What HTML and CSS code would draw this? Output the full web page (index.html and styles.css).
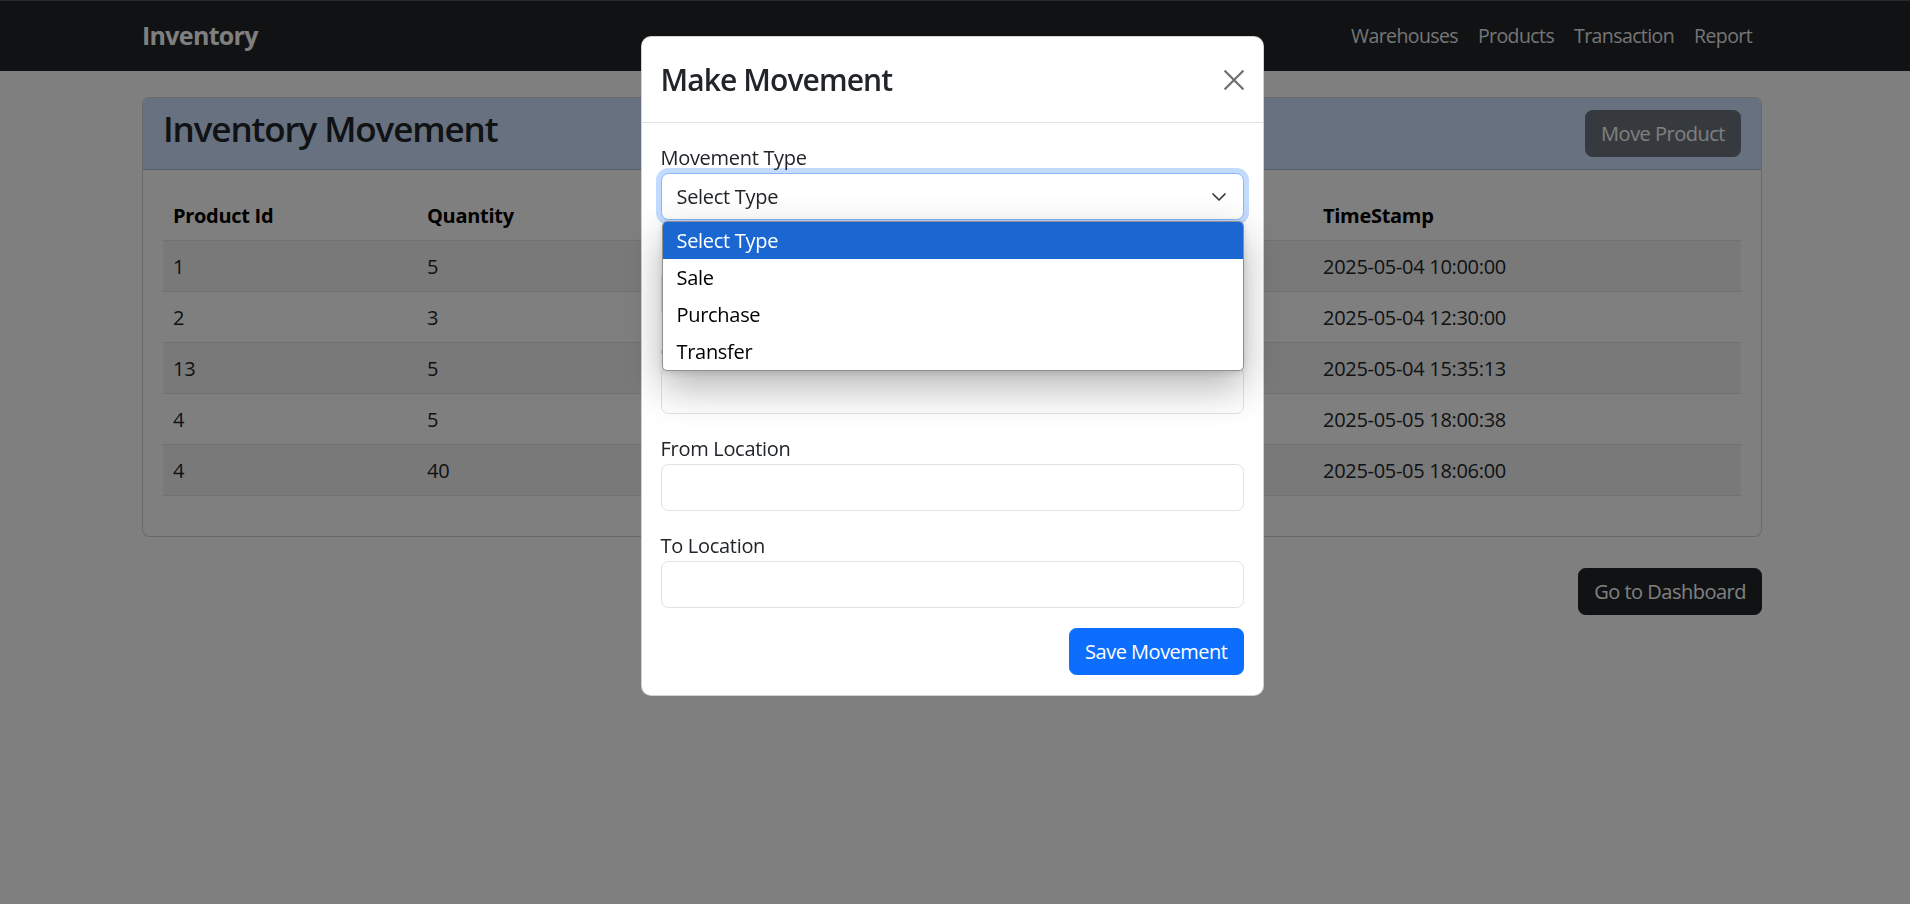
FILE: index.html
```html
<!DOCTYPE html>
<html lang="en">
<head>
<meta charset="utf-8">
<title>Inventory Movement</title>
<link rel="stylesheet" href="styles.css">
</head>
<body>
<nav class="navbar">
  <div class="container nav-inner">
    <a class="brand" href="#">Inventory</a>
    <ul class="nav-links">
      <li><a href="#">Warehouses</a></li>
      <li><a href="#">Products</a></li>
      <li><a href="#">Transaction</a></li>
      <li><a href="#">Report</a></li>
    </ul>
  </div>
</nav>

<main class="container page">
  <section class="card">
    <div class="card-header">
      <h3 class="card-title">Inventory Movement</h3>
      <button class="btn btn-secondary">Move Product</button>
    </div>
    <div class="card-body">
      <table class="table">
        <thead>
          <tr>
            <th class="c1">Product Id</th>
            <th class="c2">Quantity</th>
            <th class="c3">Type</th>
            <th class="c4">From</th>
            <th class="c5">To</th>
            <th class="c6">TimeStamp</th>
          </tr>
        </thead>
        <tbody>
          <tr><td>1</td><td>5</td><td>Sale</td><td>1</td><td>2</td><td>2025-05-04 10:00:00</td></tr>
          <tr><td>2</td><td>3</td><td>Purchase</td><td>2</td><td>1</td><td>2025-05-04 12:30:00</td></tr>
          <tr><td>13</td><td>5</td><td>Transfer</td><td>1</td><td>3</td><td>2025-05-04 15:35:13</td></tr>
          <tr><td>4</td><td>5</td><td>Sale</td><td>3</td><td>1</td><td>2025-05-05 18:00:38</td></tr>
          <tr><td>4</td><td>40</td><td>Purchase</td><td>2</td><td>3</td><td>2025-05-05 18:06:00</td></tr>
        </tbody>
      </table>
    </div>
  </section>
  <div class="page-actions">
    <button class="btn btn-dark">Go to Dashboard</button>
  </div>
</main>

<div class="backdrop"></div>

<div class="modal">
  <div class="modal-dialog">
    <div class="modal-header">
      <h4 class="modal-title">Make Movement</h4>
      <button class="btn-close" aria-label="Close">
        <svg viewBox="0 0 16 16" width="20" height="20"><path d="M1 1 15 15M15 1 1 15" stroke="currentColor" stroke-width="1.8" stroke-linecap="round" fill="none"/></svg>
      </button>
    </div>
    <div class="modal-body">
      <div class="form-group">
        <label>Movement Type</label>
        <div class="select focused">
          <span>Select Type</span>
          <svg class="chevron" viewBox="0 0 16 16" width="16" height="16"><path d="m2 5 6 6 6-6" fill="none" stroke="#343a40" stroke-width="1.7" stroke-linecap="round" stroke-linejoin="round"/></svg>
        </div>
        <ul class="select-popup">
          <li class="active">Select Type</li>
          <li>Sale</li>
          <li>Purchase</li>
          <li>Transfer</li>
        </ul>
      </div>
      <div class="form-group">
        <label>Product Id</label>
        <div class="input"></div>
      </div>
      <div class="form-group">
        <label>Quantity</label>
        <div class="input"></div>
      </div>
      <div class="form-group">
        <label>From Location</label>
        <div class="input"></div>
      </div>
      <div class="form-group">
        <label>To Location</label>
        <div class="input"></div>
      </div>
      <div class="modal-actions">
        <button class="btn btn-primary">Save Movement</button>
      </div>
    </div>
  </div>
</div>
</body>
</html>
```

FILE: styles.css
```css
* { box-sizing: border-box; }

html, body {
  margin: 0;
  height: 100%;
}

body {
  font-family: "Open Sans", "Noto Sans", sans-serif;
  font-size: 20px;
  line-height: 1.5;
  color: #212529;
  background: #fff;
  overflow: hidden;
}

/* Layout column is centred on x=952 (page had a 6px scrollbar gutter) */
.container {
  width: 1650px;
  margin: 0 auto;
  padding: 0 15px;
  position: relative;
  left: -3px;
}

/* Navbar */
.navbar {
  background: #212529;
  border-top: 1px solid #50555c;
  padding: 10px 0;
}
.nav-inner {
  display: flex;
  align-items: center;
  justify-content: space-between;
}
.brand {
  color: #fff;
  font-size: 25px;
  font-weight: 700;
  line-height: 37.5px;
  padding: 6.25px 0;
  text-decoration: none;
  letter-spacing: -0.7px;
}
.nav-links {
  list-style: none;
  margin: 0;
  padding: 0;
  display: flex;
}
.nav-links a {
  display: block;
  padding: 10px 10px;
  color: rgba(255, 255, 255, 0.92);
  text-decoration: none;
  font-size: 19.5px;
  letter-spacing: -0.6px;
}

/* Page */
.page { padding-top: 26px; }

.card {
  border: 1px solid rgba(0, 0, 0, 0.175);
  border-radius: 7.5px;
  background: #fff;
  overflow: hidden;
}
.card-header {
  background: #cfe2ff;
  border-bottom: 1px solid rgba(0, 0, 0, 0.175);
  padding: 9.5px 20px;
  display: flex;
  align-items: center;
  justify-content: space-between;
}
.card-title {
  margin: 0 0 10px;
  font-size: 35px;
  font-weight: 600;
  line-height: 1.2;
  letter-spacing: -1.1px;
}
.card-body { padding: 20px; }

.table {
  width: 100%;
  border-collapse: collapse;
  table-layout: fixed;
  margin-bottom: 20px;
}
.table th, .table td {
  text-align: left;
  padding: 11px 10px 9px;
  border-bottom: 1px solid #dee2e6;
  line-height: 30px;
  letter-spacing: -0.3px;
}
.table th { font-weight: 700; color: #000; }
.table tbody tr:nth-child(odd) td { background: #f2f2f2; }
.c1 { width: 254px; }
.c2 { width: 254px; }
.c3, .c4, .c5 { width: 214px; }

.page-actions {
  margin-top: 31px;
  text-align: right;
}

/* Buttons */
.btn {
  font-family: inherit;
  font-size: 20px;
  line-height: 30px;
  padding: 7.5px 15px;
  border: 1px solid transparent;
  border-radius: 7.5px;
  color: #fff;
  cursor: pointer;
  letter-spacing: -0.5px;
}
.btn-secondary { background: #6c757d; border-color: #6c757d; }
.btn-dark { background: #212529; border-color: #212529; }
.btn-primary { background: #0d6efd; border-color: #0d6efd; }

/* Backdrop + modal */
.backdrop {
  position: fixed;
  inset: 0;
  background: rgba(0, 0, 0, 0.5);
}
.modal {
  position: fixed;
  inset: 0;
  padding-right: 6px;
}
.modal-dialog {
  width: 623px;
  margin: 36px auto 0;
  background: #fff;
  border: 1px solid rgba(0, 0, 0, 0.175);
  border-radius: 10px;
}
.modal-header {
  display: flex;
  align-items: center;
  padding: 20px 19px 20px 19px;
  border-bottom: 1px solid #dee2e6;
}
.modal-title {
  margin: 0;
  font-size: 30px;
  line-height: 45px;
  font-weight: 600;
  letter-spacing: -0.9px;
}
.btn-close {
  margin-left: auto;
  width: 20px;
  height: 20px;
  padding: 0;
  border: 0;
  background: transparent;
  color: #6f6f6f;
  display: flex;
}
.modal-body { padding: 20px 19px; }

.form-group {
  position: relative;
  margin-bottom: 20px;
}
.form-group label {
  display: block;
  line-height: 30px;
  letter-spacing: -0.3px;
}
.select, .input {
  height: 47px;
  border: 1px solid #dee2e6;
  border-radius: 7.5px;
  background: #fff;
}
.select {
  display: flex;
  align-items: center;
  justify-content: space-between;
  padding: 0 16px 0 15px;
  letter-spacing: -0.3px;
}
.select.focused {
  border-color: #86b7fe;
  box-shadow: 0 0 0 5px rgba(13, 110, 253, 0.25);
}

.select-popup {
  position: absolute;
  top: calc(100% + 1px);
  left: 1px;
  right: 0;
  margin: 0;
  padding: 0;
  list-style: none;
  background: #fff;
  border: 1px solid #8f8f8f;
  border-radius: 5px;
  overflow: hidden;
  box-shadow: 0 16px 40px rgba(0, 0, 0, 0.3), 0 2px 6px rgba(0, 0, 0, 0.12);
  z-index: 2;
}
.select-popup li {
  height: 37px;
  line-height: 37px;
  padding-left: 14px;
  color: #000;
  letter-spacing: -0.3px;
}
.select-popup li.active {
  background: #1a67d2;
  color: #fff;
}

.modal-actions {
  display: flex;
  justify-content: flex-end;
}
```
